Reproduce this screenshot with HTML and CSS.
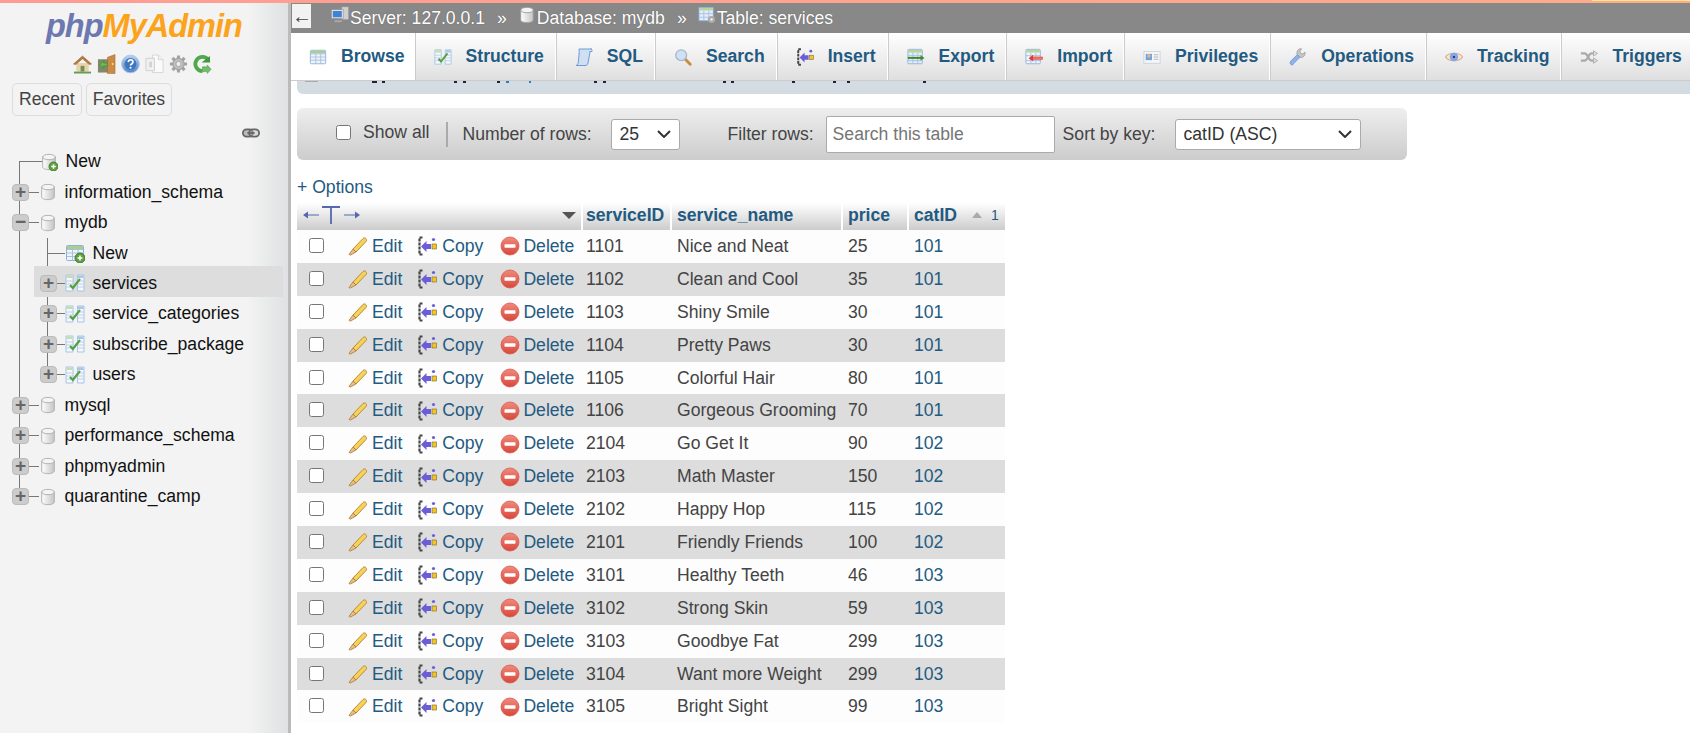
FILE: index.html
```html
<!DOCTYPE html>
<html lang="en">
<head>
<meta charset="UTF-8">
<title>127.0.0.1 / mydb / services | phpMyAdmin</title>
<link rel="stylesheet" href="styles.css">
</head>
<body>

<!-- shared icons -->
<svg class="icon-defs" xmlns="http://www.w3.org/2000/svg">
  <defs>
    <linearGradient id="g-db" x1="0" x2="1" y1="0" y2="0"><stop offset="0" stop-color="#fff"/><stop offset="1" stop-color="#c4c4c4"/></linearGradient>
    <linearGradient id="g-red" x1="0" x2="0" y1="0" y2="1"><stop offset="0" stop-color="#f08a7c"/><stop offset="1" stop-color="#d8473b"/></linearGradient>
    <linearGradient id="g-blue" x1="0" x2="0" y1="0" y2="1"><stop offset="0" stop-color="#b9d3f2"/><stop offset="1" stop-color="#4f83c8"/></linearGradient>
    <symbol id="i-db" viewBox="0 0 20 20"><path d="M3 4.500v11c0 1.800 3.200 3 7 3s7-1.200 7-3v-11z" fill="url(#g-db)" stroke="#aaa"/><ellipse cx="10" cy="4.500" rx="7" ry="3" fill="#f4f4f4" stroke="#aaa"/></symbol>
    <symbol id="i-plus-badge" viewBox="0 0 20 20"><circle cx="15" cy="15" r="5" fill="#5da13f" stroke="#3f7d2a"/><path d="M12.500 15h5M15 12.500v5" stroke="#fff" stroke-width="1.600"/></symbol>
    <symbol id="i-table" viewBox="0 0 20 20"><rect x="1.500" y="2.500" width="17" height="15" rx="1" fill="#eef4fb" stroke="#8fb0da"/><path d="M2 3h16v3H2z" fill="#a8d08d"/><path d="M2 6.500h16M2 10h16M2 13.500h16M7.500 6.500v11M13 6.500v11" stroke="#a9c0de" fill="none"/></symbol>
    <symbol id="i-struct" viewBox="0 0 20 20"><path d="M1 2h7v16H1zM12.500 2h6.500v16h-6.500z" fill="#f4f8fd" stroke="#a8c4e8"/><path d="M1.500 2.500h6v2.500h-6z" fill="#c3ddab"/><path d="M13 2.500h5.500v2.500H13z" fill="#a9c6ec"/><path d="M1 8h7M1 11h7M1 14h7M12.500 8H19M12.500 11H19M12.500 14H19" stroke="#bccfe8"/><path d="M5 12l2.800 3L15 6" fill="none" stroke="#55a043" stroke-width="2.200"/></symbol>
    <symbol id="i-sql" viewBox="1 1 18 18"><path d="M5 2h13c-2 1-2 3-2.500 6L14 16c-.5 2-1.500 2.500-3 2.500H2c1.500-.5 2-1.500 2.300-3L5 8C5.500 5 5 3.500 5 2z" fill="#cfe0f5" stroke="#6e9bd4"/><path d="M16 2c1.500 0 2.500 1 2 2.500h-2.500" fill="#e6f0fb" stroke="#6e9bd4"/></symbol>
    <symbol id="i-search" viewBox="0 0 20 20"><path d="M12 12l6 6" stroke="#c98b3f" stroke-width="3.200" stroke-linecap="round"/><circle cx="8" cy="8" r="6" fill="#cfe1f5" stroke="#a7b7c9" stroke-width="1.500"/></symbol>
    <symbol id="i-insert" viewBox="0 0 20 20"><path d="M5.500 1.500H2.500v17h3" fill="none" stroke="#444" stroke-width="2.200" stroke-dasharray="3 1"/><path d="M4 10.500l5.500-5.500v3H14v5H9.500v3z" fill="#6a5ed8"/><rect x="15" y="8" width="4.500" height="5" fill="#f0c330" stroke="#7a6a1c" stroke-width=".6"/><circle cx="16.500" cy="3.500" r="1.600" fill="#6a5ed8"/></symbol>
    <symbol id="i-export" viewBox="0 0 20 20"><rect x="1" y="1.500" width="16" height="16" rx="1" fill="#e3edf9" stroke="#8fb0da"/><path d="M1.500 2h15v3h-15z" fill="#b7d69b"/><path d="M1 8.500h16M1 14h16M6.500 5v12M12 5v12" stroke="#a9c0de"/><path d="M1 11h15.500" stroke="#3f8a2e" stroke-width="2.200"/><path d="M15 8l4.500 3-4.500 3z" fill="#3f8a2e"/></symbol>
    <symbol id="i-import" viewBox="0 0 20 20"><rect x="1" y="1.500" width="16" height="16" rx="1" fill="#eef4fb" stroke="#8fb0da"/><path d="M1.500 2h15v3h-15z" fill="#b7d69b"/><path d="M1 8.500h16M1 14h16M6.500 5v12M12 5v12" stroke="#a9c0de"/><path d="M8 10h11.500v2.600H8z" fill="#f57878" stroke="#e03c3c" stroke-width=".7"/><path d="M9 7.500l-5 3.800 5 3.800z" fill="#e03c3c"/></symbol>
    <symbol id="i-priv" viewBox="0 0 20 20"><rect x="1" y="4" width="18" height="13" fill="#f4f6f9" stroke="#ccd2d9"/><rect x="3" y="6.500" width="7" height="7" fill="#6fa5dc"/><circle cx="6.500" cy="8.800" r="2" fill="#e8b37c"/><path d="M12 7.500h5M12 10h5M12 12.500h5" stroke="#a9b2bc"/></symbol>
    <symbol id="i-wrench" viewBox="0 0 20 20"><path d="M3 19c-2-1-2.500-3-1-4.500l7.500-7.500 3 3L5 17.500C4.500 18.500 4 19 3 19z" fill="#8cb2e8" stroke="#5d8bd0" stroke-width=".7"/><path d="M9 7c-1-3 1-6 4-6.300l1 .3-2 2.500 1 2.500 2.500.7 2.300-2.200c.7 3-1.500 6.500-5 6z" fill="#c6c6c6" stroke="#8c8c8c" stroke-width=".7"/></symbol>
    <symbol id="i-eye" viewBox="0 0 20 20"><path d="M.5 10C4 4.500 16 4.500 19.500 10 16 15.500 4 15.500.5 10z" fill="#f6e6d8" stroke="#dba888" stroke-width="1.200"/><circle cx="10" cy="10" r="4.700" fill="#85a5e4"/><circle cx="10" cy="10" r="1.200" fill="#223"/></symbol>
    <symbol id="i-trig" viewBox="0 0 20 20"><path d="M1 6h4c4 0 4 8 8 8h2M1 14h4c4 0 4-8 8-8h2" fill="none" stroke="#aaa" stroke-width="2.400"/><path d="M15 3l4.500 3L15 9zM15 11l4.500 3-4.500 3z" fill="#ddd" stroke="#999" stroke-width=".7"/></symbol>
    <symbol id="i-pencil" viewBox="0 0 20 20"><path d="M5 13L15 2.500c1-1 2.500-.5 3 .2.700.8.800 2 0 2.800L8 16z" fill="#f3d25e" stroke="#c08a2a"/><path d="M5 13l3 3-5.500 3c-1 .3-1.500-.2-1.200-1z" fill="#e9bd87" stroke="#a87838" stroke-width=".8"/></symbol>
    <symbol id="i-del" viewBox="0 0 20 20"><circle cx="10" cy="10" r="9" fill="url(#g-red)" stroke="#d9584c" stroke-width=".8"/><rect x="4.500" y="8.300" width="11" height="3.400" rx=".6" fill="#fff"/></symbol>
    <symbol id="i-home" viewBox="0 0 20 20"><path d="M3.500 9v9h13V9z" fill="#e8d3a8"/><path d="M.5 10L10 1.500 19.500 10l-2.500.6L10 4.500 3 10.600z" fill="#b5793e" stroke="#8b5a2b" stroke-width=".5"/><rect x="8" y="12" width="4" height="6" fill="#7d8b5c"/><path d="M1 19h18" stroke="#5f9e55" stroke-width="2"/></symbol>
    <symbol id="i-exit" viewBox="0 0 20 20"><path d="M1 5h11v14H1z" fill="#7f8a6a"/><path d="M11 3l8-3v20h-8z" fill="#c98b45" stroke="#96642c" stroke-width=".5"/><circle cx="16.500" cy="10" r="1" fill="#ffe680"/><path d="M3 10.500l4-4v2.500h4v3H7v2.500z" fill="#6cbd51" stroke="#3f7d2a" stroke-width=".6"/></symbol>
    <symbol id="i-help" viewBox="0 0 20 20"><circle cx="10" cy="10" r="9.300" fill="url(#g-blue)" stroke="#a8c4e8"/><circle cx="10" cy="10" r="6.300" fill="#3d76bf"/><path d="M7.600 8c.3-3 5-3 5 0 0 2-2.600 2-2.600 3.600" fill="none" stroke="#fff" stroke-width="1.800"/><circle cx="10" cy="14" r="1.100" fill="#fff"/></symbol>
    <symbol id="i-docs" viewBox="0 0 20 20"><path d="M8 .5h6l5 5V19H8z" fill="#fafafa" stroke="#d6d6d6"/><path d="M14 .5v5h5" fill="#eee" stroke="#d6d6d6"/><path d="M1 4h9v13H1z" fill="#f0f0f0" stroke="#cfcfcf"/><path d="M5 8h1.800v5H5z" fill="#d8d8d8" stroke="#bbb" stroke-width=".5"/></symbol>
    <symbol id="i-gear" viewBox="0 0 20 20"><path d="M10 1v4M10 15v4M1 10h4M15 10h4M3.600 3.600l2.900 2.900M13.500 13.500l2.900 2.900M3.600 16.400l2.900-2.900M13.500 6.500l2.900-2.900" stroke="#a4a4a4" stroke-width="3.400"/><circle cx="10" cy="10" r="6" fill="#bdbdbd" stroke="#9a9a9a"/><circle cx="10" cy="10" r="2.600" fill="#f0f0f0" stroke="#9a9a9a" stroke-width=".7"/></symbol>
    <symbol id="i-reload" viewBox="0 0 20 20"><path d="M16 5.500A7.500 7.500 0 1 0 10 17.500" fill="none" stroke="#4fa84b" stroke-width="4"/><path d="M9 8.500h9l-.2-7z" fill="#3f9a3c"/><path d="M10 13h5v-2l4 4.500-4 4.500v-2h-5z" fill="#6ec06a" stroke="#3f8a3a" stroke-width=".5"/></symbol>
    <symbol id="i-link" viewBox="0 0 20 10"><rect x="1" y="1" width="11" height="8" rx="4" fill="#bbb" stroke="#666" stroke-width="2"/><rect x="8" y="1" width="11" height="8" rx="4" fill="#bbb" fill-opacity=".4" stroke="#666" stroke-width="2"/><path d="M6 5h8" stroke="#666" stroke-width="2"/></symbol>
    <symbol id="i-server" viewBox="0 0 20 20"><rect x="12" y="1" width="7.500" height="14" fill="#cfcfcf" stroke="#999" stroke-width=".6"/><rect x=".5" y="4" width="13" height="10" fill="#e4e4e4" stroke="#888" stroke-width=".6"/><rect x="2" y="5.500" width="10" height="7" fill="#3f83d8"/><path d="M4 16h8v2H4z" fill="#aaa"/></symbol>
    <symbol id="i-crumb-db" viewBox="0 0 20 20"><path d="M3 4.500v11c0 1.800 3.200 3 7 3s7-1.200 7-3v-11z" fill="url(#g-db)" stroke="#999"/><ellipse cx="10" cy="4.500" rx="7" ry="3" fill="#f4f4f4" stroke="#999"/></symbol>
    <symbol id="i-crumb-tbl" viewBox="0 0 20 20"><rect x="1" y="1.500" width="16" height="15" fill="#e3edf9" stroke="#7fa3d6"/><path d="M1.500 2h15v3h-15z" fill="#b7d69b"/><path d="M1 8.500h16M1 12.500h16M6.500 5v11M12 5v11" stroke="#a9c0de"/><circle cx="15" cy="15" r="4" fill="#aaa"/><circle cx="15" cy="15" r="1.500" fill="#eee"/></symbol>
    <symbol id="i-resize" viewBox="0 0 57 20"><path d="M1 10h15M41 10h15" stroke="#5568b0" stroke-width="1.200"/><path d="M0 10l5-3.500v7zM57 10l-5-3.500v7z" fill="#5568b0"/><path d="M19 2h18M28 2v17" stroke="#5568b0" stroke-width="1.800"/></symbol>
  </defs>
</svg>

<div class="top-strip"></div>

<div class="page">
  <!-- Panel de navegacion -->
  <aside class="sidebar">
    <div class="logo"><span class="logo-php">php</span><span class="logo-my">MyAdmin</span></div>
    <div class="quick-icons">
      <svg class="quick"><use href="#i-home"/></svg>
      <svg class="quick"><use href="#i-exit"/></svg>
      <svg class="quick"><use href="#i-help"/></svg>
      <svg class="quick"><use href="#i-docs"/></svg>
      <svg class="quick"><use href="#i-gear"/></svg>
      <svg class="quick"><use href="#i-reload"/></svg>
    </div>
    <div class="recent-row">
      <button class="side-btn">Recent</button>
      <button class="side-btn">Favorites</button>
    </div>
    <div class="link-row"><svg class="link-icon"><use href="#i-link"/></svg></div>

    <div class="tree">
      <div class="node"><span class="stub"></span><svg class="db-ic"><use href="#i-db"/><use href="#i-plus-badge"/></svg><span class="node-name">New</span></div>
      <div class="node"><span class="exp">+</span><span class="conn"></span><svg class="db-ic"><use href="#i-db"/></svg><span class="node-name">information_schema</span></div>
      <div class="node"><span class="exp">&minus;</span><span class="conn"></span><svg class="db-ic"><use href="#i-db"/></svg><span class="node-name">mydb</span></div>
      <div class="subtree">
        <div class="node sub"><span class="stub"></span><svg class="tb-ic"><use href="#i-table"/><use href="#i-plus-badge"/></svg><span class="node-name">New</span></div>
        <div class="node sub selected"><span class="exp">+</span><span class="conn"></span><svg class="tb-ic"><use href="#i-struct"/></svg><span class="node-name">services</span></div>
        <div class="node sub"><span class="exp">+</span><span class="conn"></span><svg class="tb-ic"><use href="#i-struct"/></svg><span class="node-name">service_categories</span></div>
        <div class="node sub"><span class="exp">+</span><span class="conn"></span><svg class="tb-ic"><use href="#i-struct"/></svg><span class="node-name">subscribe_package</span></div>
        <div class="node sub"><span class="exp">+</span><span class="conn"></span><svg class="tb-ic"><use href="#i-struct"/></svg><span class="node-name">users</span></div>
      </div>
      <div class="node"><span class="exp">+</span><span class="conn"></span><svg class="db-ic"><use href="#i-db"/></svg><span class="node-name">mysql</span></div>
      <div class="node"><span class="exp">+</span><span class="conn"></span><svg class="db-ic"><use href="#i-db"/></svg><span class="node-name">performance_schema</span></div>
      <div class="node"><span class="exp">+</span><span class="conn"></span><svg class="db-ic"><use href="#i-db"/></svg><span class="node-name">phpmyadmin</span></div>
      <div class="node"><span class="exp">+</span><span class="conn"></span><svg class="db-ic"><use href="#i-db"/></svg><span class="node-name">quarantine_camp</span></div>
    </div>
  </aside>

  <div class="splitter"></div>

  <main class="content">
    <div class="crumbs">
      <span class="back">&larr;</span>
      <svg class="crumb-ic first"><use href="#i-server"/></svg><span>Server: 127.0.0.1</span>
      <span class="sep">&raquo;</span>
      <svg class="crumb-ic"><use href="#i-crumb-db"/></svg><span>Database: mydb</span>
      <span class="sep">&raquo;</span>
      <svg class="crumb-ic"><use href="#i-crumb-tbl"/></svg><span>Table: services</span>
    </div>

    <nav class="tabs">
      <a class="tab active"><svg class="tab-ic"><use href="#i-table"/></svg>Browse</a>
      <a class="tab"><svg class="tab-ic"><use href="#i-struct"/></svg>Structure</a>
      <a class="tab"><svg class="tab-ic"><use href="#i-sql"/></svg>SQL</a>
      <a class="tab"><svg class="tab-ic"><use href="#i-search"/></svg>Search</a>
      <a class="tab"><svg class="tab-ic"><use href="#i-insert"/></svg>Insert</a>
      <a class="tab"><svg class="tab-ic"><use href="#i-export"/></svg>Export</a>
      <a class="tab"><svg class="tab-ic"><use href="#i-import"/></svg>Import</a>
      <a class="tab"><svg class="tab-ic"><use href="#i-priv"/></svg>Privileges</a>
      <a class="tab"><svg class="tab-ic"><use href="#i-wrench"/></svg>Operations</a>
      <a class="tab"><svg class="tab-ic"><use href="#i-eye"/></svg>Tracking</a>
      <a class="tab"><svg class="tab-ic"><use href="#i-trig"/></svg>Triggers</a>
    </nav>

    <!-- the message scrolled under the tabs: only the tips of its letters show -->
    <div class="sql-strip">
      <svg class="sql-specks" viewBox="0 0 640 3">
        <path d="M8 0h13v1H8z" fill="#aaa"/>
        <path d="M75 0h5v2h-5zM85 0h3v2h-3zM157 0h3v2h-3zM166 0h3v2h-3zM200 0h3v2h-3zM297 0h3v2h-3zM306 0h3v2h-3zM426 0h3v2h-3zM434 0h3v2h-3zM495 0h3v2h-3zM536 0h3v2h-3zM550 0h3v2h-3zM626 0h3v2h-3z" fill="#223"/>
        <path d="M209 0h3v2h-3zM232 0h2v2h-2z" fill="#2a7fb8"/>
      </svg>
    </div>

    <div class="filter-bar">
      <input type="checkbox" class="filter-check">
      <span class="show-all">Show all</span>
      <span class="filter-div"></span>
      <span>Number of rows:</span>
      <select class="sel-rows"><option>25</option></select>
      <span class="filter-label">Filter rows:</span>
      <input type="text" class="filter-input" placeholder="Search this table">
      <span>Sort by key:</span>
      <select class="sel-key"><option>catID (ASC)</option></select>
    </div>

    <a class="options">+ Options</a>

    <table class="results">
      <colgroup><col class="c-act"><col class="c-id"><col class="c-name"><col class="c-price"><col class="c-cat"></colgroup>
      <thead>
        <tr>
          <th class="th-act"><div class="th-act-in"><svg class="resize-ic"><use href="#i-resize"/></svg><span class="drop"></span></div></th>
          <th>serviceID</th>
          <th>service_name</th>
          <th>price</th>
          <th><div class="th-sort">catID<span class="sort-up"></span><span class="sort-num">1</span></div></th>
        </tr>
      </thead>
      <tbody>
        <tr><td><div class="acts"><input type="checkbox"><a class="act a-edit"><svg><use href="#i-pencil"/></svg>Edit</a><a class="act a-copy"><svg><use href="#i-insert"/></svg>Copy</a><a class="act a-del"><svg><use href="#i-del"/></svg>Delete</a></div></td><td>1101</td><td>Nice and Neat</td><td>25</td><td class="fk">101</td></tr>
        <tr><td><div class="acts"><input type="checkbox"><a class="act a-edit"><svg><use href="#i-pencil"/></svg>Edit</a><a class="act a-copy"><svg><use href="#i-insert"/></svg>Copy</a><a class="act a-del"><svg><use href="#i-del"/></svg>Delete</a></div></td><td>1102</td><td>Clean and Cool</td><td>35</td><td class="fk">101</td></tr>
        <tr><td><div class="acts"><input type="checkbox"><a class="act a-edit"><svg><use href="#i-pencil"/></svg>Edit</a><a class="act a-copy"><svg><use href="#i-insert"/></svg>Copy</a><a class="act a-del"><svg><use href="#i-del"/></svg>Delete</a></div></td><td>1103</td><td>Shiny Smile</td><td>30</td><td class="fk">101</td></tr>
        <tr><td><div class="acts"><input type="checkbox"><a class="act a-edit"><svg><use href="#i-pencil"/></svg>Edit</a><a class="act a-copy"><svg><use href="#i-insert"/></svg>Copy</a><a class="act a-del"><svg><use href="#i-del"/></svg>Delete</a></div></td><td>1104</td><td>Pretty Paws</td><td>30</td><td class="fk">101</td></tr>
        <tr><td><div class="acts"><input type="checkbox"><a class="act a-edit"><svg><use href="#i-pencil"/></svg>Edit</a><a class="act a-copy"><svg><use href="#i-insert"/></svg>Copy</a><a class="act a-del"><svg><use href="#i-del"/></svg>Delete</a></div></td><td>1105</td><td>Colorful Hair</td><td>80</td><td class="fk">101</td></tr>
        <tr><td><div class="acts"><input type="checkbox"><a class="act a-edit"><svg><use href="#i-pencil"/></svg>Edit</a><a class="act a-copy"><svg><use href="#i-insert"/></svg>Copy</a><a class="act a-del"><svg><use href="#i-del"/></svg>Delete</a></div></td><td>1106</td><td>Gorgeous Grooming</td><td>70</td><td class="fk">101</td></tr>
        <tr><td><div class="acts"><input type="checkbox"><a class="act a-edit"><svg><use href="#i-pencil"/></svg>Edit</a><a class="act a-copy"><svg><use href="#i-insert"/></svg>Copy</a><a class="act a-del"><svg><use href="#i-del"/></svg>Delete</a></div></td><td>2104</td><td>Go Get It</td><td>90</td><td class="fk">102</td></tr>
        <tr><td><div class="acts"><input type="checkbox"><a class="act a-edit"><svg><use href="#i-pencil"/></svg>Edit</a><a class="act a-copy"><svg><use href="#i-insert"/></svg>Copy</a><a class="act a-del"><svg><use href="#i-del"/></svg>Delete</a></div></td><td>2103</td><td>Math Master</td><td>150</td><td class="fk">102</td></tr>
        <tr><td><div class="acts"><input type="checkbox"><a class="act a-edit"><svg><use href="#i-pencil"/></svg>Edit</a><a class="act a-copy"><svg><use href="#i-insert"/></svg>Copy</a><a class="act a-del"><svg><use href="#i-del"/></svg>Delete</a></div></td><td>2102</td><td>Happy Hop</td><td>115</td><td class="fk">102</td></tr>
        <tr><td><div class="acts"><input type="checkbox"><a class="act a-edit"><svg><use href="#i-pencil"/></svg>Edit</a><a class="act a-copy"><svg><use href="#i-insert"/></svg>Copy</a><a class="act a-del"><svg><use href="#i-del"/></svg>Delete</a></div></td><td>2101</td><td>Friendly Friends</td><td>100</td><td class="fk">102</td></tr>
        <tr><td><div class="acts"><input type="checkbox"><a class="act a-edit"><svg><use href="#i-pencil"/></svg>Edit</a><a class="act a-copy"><svg><use href="#i-insert"/></svg>Copy</a><a class="act a-del"><svg><use href="#i-del"/></svg>Delete</a></div></td><td>3101</td><td>Healthy Teeth</td><td>46</td><td class="fk">103</td></tr>
        <tr><td><div class="acts"><input type="checkbox"><a class="act a-edit"><svg><use href="#i-pencil"/></svg>Edit</a><a class="act a-copy"><svg><use href="#i-insert"/></svg>Copy</a><a class="act a-del"><svg><use href="#i-del"/></svg>Delete</a></div></td><td>3102</td><td>Strong Skin</td><td>59</td><td class="fk">103</td></tr>
        <tr><td><div class="acts"><input type="checkbox"><a class="act a-edit"><svg><use href="#i-pencil"/></svg>Edit</a><a class="act a-copy"><svg><use href="#i-insert"/></svg>Copy</a><a class="act a-del"><svg><use href="#i-del"/></svg>Delete</a></div></td><td>3103</td><td>Goodbye Fat</td><td>299</td><td class="fk">103</td></tr>
        <tr><td><div class="acts"><input type="checkbox"><a class="act a-edit"><svg><use href="#i-pencil"/></svg>Edit</a><a class="act a-copy"><svg><use href="#i-insert"/></svg>Copy</a><a class="act a-del"><svg><use href="#i-del"/></svg>Delete</a></div></td><td>3104</td><td>Want more Weight</td><td>299</td><td class="fk">103</td></tr>
        <tr><td><div class="acts"><input type="checkbox"><a class="act a-edit"><svg><use href="#i-pencil"/></svg>Edit</a><a class="act a-copy"><svg><use href="#i-insert"/></svg>Copy</a><a class="act a-del"><svg><use href="#i-del"/></svg>Delete</a></div></td><td>3105</td><td>Bright Sight</td><td>99</td><td class="fk">103</td></tr>
      </tbody>
    </table>
  </main>
</div>

</body>
</html>
```

FILE: styles.css
```css
html, body {
  margin: 0;
  height: 733px;
  overflow: hidden;
}

body {
  font-family: "Liberation Sans", Arial, sans-serif;
  font-size: 17.6px;
  color: #444;
  background: white;
}

.icon-defs {
  position: absolute;
  width: 0;
  height: 0;
}

.top-strip {
  height: 3px;
  background:
    linear-gradient(#ffe88f, #ffe88f) 1592px 0 / 98px 1px no-repeat,
    linear-gradient(to right, #ff9c93, #ffab8a);
}

.page {
  display: flex;
  height: 730px;
}

/* Sidebar */
.sidebar {
  width: 288px;
  flex: none;
  background: linear-gradient(to right, #f3f3f3 86%, #dfe1e2);
  color: #111;
}

.logo {
  height: 47px;
  padding-left: 46px;
  font-size: 32.5px;
  line-height: 46px;
  font-weight: bold;
  font-style: italic;
  letter-spacing: -1px;
}

.logo-php { color: #6c78af; }
.logo-my { color: #fca31c; }

.quick-icons {
  display: flex;
  gap: 5px;
  padding-left: 73px;
  margin-top: 4px;
  height: 20px;
}

.quick {
  width: 19px;
  height: 20px;
}

.recent-row {
  display: flex;
  gap: 4px;
  padding-left: 12px;
  margin-top: 9px;
}

.side-btn {
  height: 33px;
  padding: 0 6px;
  background: #f3f3f3;
  border: 1px solid #ddd;
  border-radius: 5px;
  font-family: inherit;
  font-size: 17.6px;
  color: #444;
}

.link-row {
  display: flex;
  justify-content: flex-end;
  padding-right: 28px;
  margin-top: 12px;
  height: 11px;
}

.link-icon {
  width: 18px;
  height: 10px;
}

.tree {
  margin-top: 7.5px;
  background: linear-gradient(#777, #777) 19px 15px / 1px 335px no-repeat;
}

.node {
  display: flex;
  align-items: center;
  height: 30.45px;
  padding-left: 12px;
}

.node-name {
  margin-left: 7.5px;
}

.stub {
  width: 27px;
  height: 1px;
  margin-left: 7px;
  margin-right: -6px;
  background: #777;
  flex: none;
}

.exp {
  width: 17px;
  height: 17px;
  flex: none;
  background: #ccc;
  border: 1px solid #bbb;
  border-radius: 4px;
  box-sizing: border-box;
  color: #666;
  font-size: 19px;
  font-weight: bold;
  line-height: 13px;
  text-align: center;
}

.conn {
  width: 10px;
  height: 1px;
  background: #777;
  flex: none;
}

.db-ic {
  width: 18px;
  height: 18px;
  flex: none;
}

.subtree {
  background: linear-gradient(#777, #777) 47px 0 / 1px 138px no-repeat;
}

.node.sub {
  padding-left: 40px;
}

.node.sub .conn {
  width: 8px;
}

.node.sub .stub {
  width: 18px;
  margin-right: 0;
}

.tb-ic {
  width: 20px;
  height: 20px;
  flex: none;
}

/* la franja queda 2px por encima del texto */
.node.selected {
  box-sizing: border-box;
  margin: -2px 5px 2px 34px;
  padding-left: 6px;
  padding-top: 4px;
  background: #ddd;
}

.splitter {
  width: 3px;
  flex: none;
  background: #bbb;
}

/* Main */
.content {
  flex: 1;
  min-width: 0;
  overflow: hidden;
}

.crumbs {
  display: flex;
  align-items: center;
  height: 30px;
  padding-left: 1px;
  background: #888;
  color: white;
  text-shadow: 0 0 1px #555;
}

.back {
  width: 19px;
  height: 24px;
  margin-top: -4px;
  background: #f2f2f2;
  color: #444;
  font-size: 20px;
  line-height: 24px;
  text-align: center;
  text-shadow: none;
}

.crumb-ic {
  width: 18px;
  height: 18px;
  margin-top: -6px;
  margin-right: 1px;
}

.crumb-ic.first {
  margin-left: 20px;
}

.sep {
  margin: 0 11px 0 12px;
}

.tabs {
  display: flex;
  height: 48px;
  border-bottom: 1px solid #ccc;
  box-sizing: border-box;
  overflow: hidden;
}

.tab {
  display: flex;
  align-items: center;
  flex: none;
  padding: 0 12px 0 18px;
  background: linear-gradient(#fff, #dfdfdf);
  border-right: 1px solid #ccc;
  box-shadow: inset -1px 0 0 white;
  font-weight: bold;
  color: #235a81;
}

.tab.active {
  padding-right: 10px;
  background: white;
  box-shadow: none;
}

.tab-ic {
  width: 18px;
  height: 18px;
  margin-right: 14px;
  flex: none;
}

.sql-strip {
  height: 13px;
  margin-left: 6px;
  background: #d3dce3;
  border-radius: 0 0 0 6px;
  overflow: hidden;
}

.sql-specks {
  display: block;
  width: 640px;
  height: 3px;
}

.filter-bar {
  display: flex;
  align-items: center;
  width: 1110px;
  height: 52px;
  margin: 14px 0 0 6px;
  box-sizing: border-box;
  padding-left: 39px;
  background: linear-gradient(#eee, #ccc);
  border-radius: 6px;
}

.filter-check {
  width: 15px;
  height: 15px;
  margin: -3px 12px 0 0;
}

.show-all {
  margin-top: -3px;
}

.filter-div {
  width: 2px;
  height: 25px;
  margin: 0 15px 0 16px;
  background: #aaa;
}

.filter-bar select {
  appearance: none;
  height: 31px;
  padding: 0 8px;
  background: white url("data:image/svg+xml,%3Csvg xmlns='http://www.w3.org/2000/svg' width='14' height='8'%3E%3Cpath d='M1 1l6 6 6-6' fill='none' stroke='%23333' stroke-width='2'/%3E%3C/svg%3E") no-repeat right 8px center;
  border: 1px solid #aaa;
  border-radius: 3px;
  font-family: inherit;
  font-size: 17.6px;
  color: #333;
}

.sel-rows {
  width: 69px;
  margin: 0 48px 0 19px;
}

.filter-label {
  margin-right: 12px;
}

.filter-input {
  width: 229px;
  height: 37px;
  box-sizing: border-box;
  margin-right: 8px;
  padding: 0 6px;
  border: 1px solid #aaa;
  border-radius: 2px;
  font-family: inherit;
  font-size: 17.6px;
}

.sel-key {
  width: 186px;
  margin-left: 19px;
}

.options {
  display: block;
  margin: 16px 0 0 6px;
  line-height: 22px;
  color: #235a81;
}

/* Tabla de resultados */
.results {
  width: 708px;
  margin: 5px 0 0 6px;
  table-layout: fixed;
  border-collapse: collapse;
}

.c-act { width: 284px; }
.c-id { width: 89px; }
.c-name { width: 171px; }
.c-price { width: 66px; }
.c-cat { width: 98px; }

.results th {
  height: 27px;
  padding: 0 0 3px 5px;
  box-sizing: border-box;
  background: linear-gradient(#fff, #ccc);
  box-shadow: inset 2px 0 0 white;
  color: #235a81;
  font-weight: bold;
  text-align: left;
}

.results th:first-child {
  box-shadow: none;
  padding-left: 6px;
}

.results th:nth-child(n+3), .results td:nth-child(n+3) {
  padding-left: 7px;
}

.th-act-in {
  display: flex;
  align-items: center;
  justify-content: space-between;
  padding: 0 5px 0 0;
}

.resize-ic {
  width: 57px;
  height: 20px;
}

.drop {
  width: 0;
  height: 0;
  border-left: 7px solid transparent;
  border-right: 7px solid transparent;
  border-top: 7px solid #555;
}

.th-sort {
  display: flex;
  align-items: center;
}

.sort-up {
  width: 0;
  height: 0;
  margin: 0 9px 0 15px;
  border-left: 5px solid transparent;
  border-right: 5px solid transparent;
  border-bottom: 6px solid #aaa;
}

.sort-num {
  font-size: 14px;
  font-weight: normal;
}

.results td {
  height: 32.9px;
  padding: 0 0 0 5px;
  box-sizing: border-box;
  background: #fdfdfd;
  white-space: nowrap;
}

.results td:first-child {
  padding-left: 6px;
}

.results tbody tr:nth-child(even) td {
  background: #ddd;
}

.results td.fk {
  color: #235a81;
}

.acts {
  display: flex;
  align-items: center;
  padding-left: 3px;
}

.acts input {
  width: 15px;
  height: 15px;
  margin: -2px 0 0 3px;
}

.act {
  display: flex;
  align-items: center;
  color: #235a81;
}

.act svg {
  width: 20px;
  height: 20px;
  margin-right: 4px;
  flex: none;
}

.a-edit { margin-left: 24px; }
.a-copy { margin-left: 15px; }
.a-copy svg { margin-right: 5px; }
.a-del { margin-left: 17px; }
.a-del svg { margin-right: 3px; }
```
